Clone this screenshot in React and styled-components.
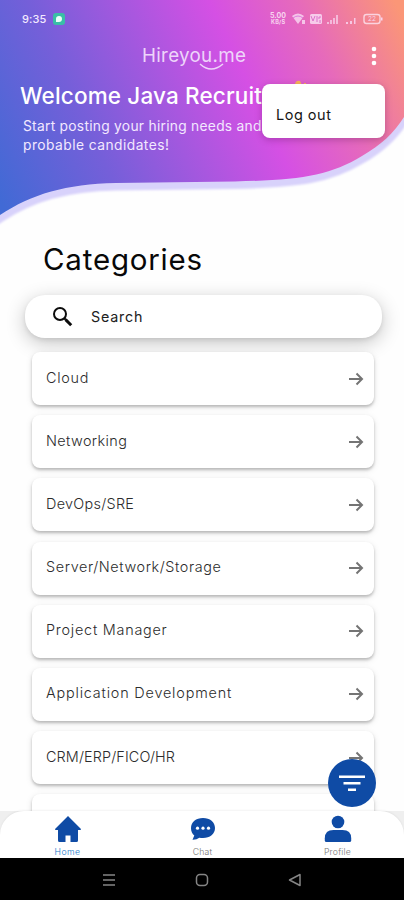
import React from 'react';
import styled, { createGlobalStyle } from 'styled-components';

const GlobalStyle = createGlobalStyle`
  * { box-sizing: border-box; }
  html, body { margin: 0; padding: 0; background: #fff; }
  body { font-family: Inter, 'Open Sans', sans-serif; overflow: hidden; }
  h1, h2, p, ul { margin: 0; padding: 0; font-weight: 400; }
  button { font: inherit; border: 0; padding: 0; background: none; }
`;

const Phone = styled.div`
  position: relative;
  width: 404px;
  height: 900px;
  display: flex;
  flex-direction: column;
  overflow: hidden;
  background: #fefefe;
`;

const Header = styled.header`
  position: relative;
  flex: none;
  height: 226px;
  color: #fff;
`;

const Wave = styled.svg`
  position: absolute;
  inset: 0;
  display: block;
`;

const HeaderContent = styled.div`
  position: relative;
  display: flex;
  flex-direction: column;
`;

const StatusBar = styled.div`
  height: 37px;
  padding: 0 20px 0 22px;
  display: flex;
  align-items: center;
  justify-content: space-between;
`;

const Clock = styled.div`
  display: flex;
  align-items: center;
  gap: 7px;
  font-size: 11px;
  font-weight: 500;
  letter-spacing: 0.1px;
  color: #f3e9ff;
`;

const TitleBar = styled.div`
  height: 38px;
  padding: 0 25px 0 142px;
  display: flex;
  align-items: center;
  justify-content: space-between;
`;

const Brand = styled.div`
  position: relative;
  font-size: 18.8px;
  line-height: 22px;
  letter-spacing: 0.3px;
  color: #eed5fa;
`;

const Smile = styled.svg`
  position: absolute;
  left: 57px;
  top: 18px;
`;

const Greeting = styled.h1`
  padding: 7px 0 0 20px;
  font-size: 22.5px;
  line-height: 27px;
  font-weight: 500;
  letter-spacing: 0.15px;
  white-space: nowrap;
`;

const Lead = styled.p`
  padding: 8px 0 0 23px;
  display: flex;
  flex-direction: column;
  font-size: 13.8px;
  line-height: 19px;
  white-space: nowrap;
  color: #f3e8ff;
`;

const LeadLine = styled.span`
  letter-spacing: ${(p) => p.$spacing}px;
`;

const Hand = styled.svg`
  position: absolute;
  left: 292px;
  top: 79px;
`;

const Menu = styled.div`
  position: absolute;
  z-index: 3;
  left: 262px;
  top: 84px;
  width: 123px;
  height: 54px;
  padding-left: 14px;
  display: flex;
  align-items: center;
  border-radius: 8px;
  background: #fff;
  box-shadow: 0 2px 7px rgba(60, 0, 60, 0.28);
`;

const MenuItem = styled.button`
  padding-top: 7px;
  color: #161616;
  font-size: 14.5px;
  letter-spacing: 0.5px;
`;

const Main = styled.main`
  flex: 1;
  min-height: 0;
  overflow: hidden;
  display: flex;
  flex-direction: column;
`;

const Heading = styled.h2`
  flex: none;
  padding: 15px 0 0 43px;
  height: 69px;
  font-size: 29.5px;
  line-height: 36px;
  letter-spacing: 0.8px;
  color: #080808;
`;

const SearchBar = styled.div`
  flex: none;
  height: 43px;
  margin: 0 22px 0 25px;
  padding: 0 0 1px 27px;
  display: flex;
  align-items: center;
  gap: 18px;
  border-radius: 20px;
  background: #fff;
  box-shadow: 0 5px 19px rgba(0, 0, 0, 0.23), 0 2px 4px rgba(0, 0, 0, 0.08);
  font-size: 14.3px;
  letter-spacing: 0.8px;
  color: #202020;
`;

const List = styled.ul`
  margin: 14px 30px 0 32px;
  display: flex;
  flex-direction: column;
  gap: 10.2px;
  list-style: none;
`;

const Row = styled.li`
  flex: none;
  height: 53px;
  padding: 0 10px 3px 14px;
  display: flex;
  align-items: center;
  justify-content: space-between;
  border-radius: 8px;
  background: #fff;
  box-shadow: 0 2px 3px rgba(0, 0, 0, 0.22), 0 2px 7px rgba(0, 0, 0, 0.1);
  font-size: 14.4px;
  color: #2c2c2c;
`;

const RowLabel = styled.span`
  font-weight: 300;
  letter-spacing: ${(p) => p.$spacing}px;
`;

const RowArrow = styled.svg`
  margin-top: 3px;
`;

const FilterButton = styled.button`
  position: absolute;
  z-index: 2;
  left: 328px;
  top: 759px;
  width: 48px;
  height: 48px;
  border-radius: 50%;
  background: #0f4ba5;
  display: grid;
  place-items: center;
`;

const TabDock = styled.div`
  position: relative;
  flex: none;
  height: 47px;
  background: #efefef;
`;

const Tabs = styled.nav`
  height: 47px;
  padding-left: 1px;
  display: grid;
  grid-template-columns: repeat(3, 135px);
  justify-content: center;
  border-radius: 24px 24px 0 0;
  background: #fff;
  box-shadow: 0 -1px 2px rgba(0, 0, 0, 0.05);
`;

const Tab = styled.div`
  padding-top: 4px;
  display: flex;
  flex-direction: column;
  align-items: center;
  gap: 4px;
  font-size: 8.7px;
  line-height: 10px;
  font-weight: 300;
  letter-spacing: ${(p) => (p.$active ? 0.4 : 0.2)}px;
  color: ${(p) => (p.$active ? '#1677c8' : '#777')};
`;

const SystemBar = styled.div`
  flex: none;
  height: 42px;
  padding: 2px 0 0 102px;
  display: grid;
  grid-template-columns: 93px 93px 14px;
  align-items: center;
  background: #000;
`;

const TabIcon = ({ name }) => (
  <svg width="28" height="28" viewBox="0 0 28 28" fill="#0f4ba5">
    {name === 'Home' && (
      <path d="M14 1 27 14Q27.3 15 26 15H24V25.5Q24 27 22.5 27H16.5V20.5H11.5V27H5.5Q4 27 4 25.5V15H2Q.7 15 1 14Z" />
    )}
    {name === 'Chat' && (
      <>
        <path d="M14 3C7 3 2 7 2 13.2c0 3.2 1.4 5.7 3.3 7.4L3.5 24.7c3 .1 5-.8 6.8-2 1.1.3 2.4.4 3.7.4 7 0 12-4 12-10S21 3 14 3Z" />
        <g fill="#fff">
          <circle cx="8.5" cy="13.2" r="1.6" />
          <circle cx="14" cy="13.2" r="1.6" />
          <circle cx="19.5" cy="13.2" r="1.6" />
        </g>
      </>
    )}
    {name === 'Profile' && (
      <>
        <circle cx="14" cy="7" r="6.3" />
        <path d="M.8 25.5v-2.2Q.8 15 9.5 15h9q8.7 0 8.7 8.3v2.2Q27.2 27 25.5 27h-23Q.8 27 .8 25.5Z" />
      </>
    )}
  </svg>
);

const StatusIcons = () => (
  <svg width="116" height="16" viewBox="0 0 116 16" fill="#f8d5f0">
    <g fontFamily="Inter, sans-serif" fontWeight="700">
      <text x="2" y="7" fontSize="7" textLength="16">5.00</text>
      <text x="3" y="13" fontSize="5.5" textLength="14">KB/S</text>
    </g>
    <path d="M24 5q6-5 12 0l-6 8ZM34 9h3v4h-3z" opacity=".85" />
    <path d="M25 7q5-4 10 0" fill="none" stroke="#d867d8" strokeWidth=".8" />
    <rect x="42" y="3" width="12" height="10" rx="1.5" opacity=".9" />
    <path d="m43 5 2 5 2-5M49 5v6M52 5v2h-2m2 2v3" fill="none" stroke="#d966c7" strokeWidth=".9" />
    <path d="M59 11h2v2h-2zm3-2h2v4h-2zm3-2h2v6h-2zm3-3h2v9h-2z" opacity=".7" />
    <path d="M78 11h2v2h-2zm4-1h2v3h-2zm4-3h1.5v6H86z" opacity=".85" />
    <rect x="96" y="3.5" width="16" height="9" rx="2.5" fill="none" stroke="#fbd3df" strokeWidth="1.4" />
    <path d="M113 6.5h1.5v3H113z" />
    <text x="104" y="10.4" fontSize="6.5" textAnchor="middle" fontFamily="Inter, sans-serif">22</text>
  </svg>
);

const categories = [
  ['Cloud', 0.75],
  ['Networking', 0.4],
  ['DevOps/SRE', 0.3],
  ['Server/Network/Storage', 0.6],
  ['Project Manager', 0.77],
  ['Application Development', 0.82],
  ['CRM/ERP/FICO/HR', 0.13],
  ['', 0],
];

const curve =
  'M0 215C32 194 66 184 116 183L235 181.5C300 180 329 176 362 156C381 145 394 133 404 117';

export default function App() {
  return (
    <>
      <GlobalStyle />
      <Phone>
        <Header>
          <Wave width="404" height="226" viewBox="0 0 404 226">
            <defs>
              <linearGradient id="sky" gradientUnits="userSpaceOnUse" x1="0" y1="200" x2="400" y2="12">
                <stop offset="0" stopColor="#416ad5" />
                <stop offset=".25" stopColor="#755fd9" />
                <stop offset=".62" stopColor="#d550e4" />
                <stop offset=".8" stopColor="#e66abb" />
                <stop offset="1" stopColor="#fb9677" />
              </linearGradient>
              <filter id="soft" x="-5%" y="-20%" width="110%" height="140%">
                <feGaussianBlur stdDeviation="1" />
              </filter>
            </defs>
            <path d={`M-10 222L${curve.slice(1)}L412 103`} transform="translate(0 3)" fill="none" stroke="#d8d2fb" strokeWidth="9" filter="url(#soft)" />
            <path d={`${curve}V0H0Z`} fill="url(#sky)" />
          </Wave>
          <HeaderContent>
            <StatusBar>
              <Clock>
                9:35
                <svg width="12" height="12" viewBox="0 0 12 12">
                  <rect width="12" height="12" rx="3" fill="#39bfa6" />
                  <path d="M3 9V5.8A3 3 0 1 1 6 9Z" fill="#e9fff9" />
                </svg>
              </Clock>
              <StatusIcons />
            </StatusBar>
            <TitleBar>
              <Brand>
                Hireyou.me
                <Smile width="27" height="8" viewBox="0 0 27 8">
                  <path d="M1 1Q12 11 24 1" fill="none" stroke="#eed5fa" strokeWidth="1.5" />
                </Smile>
              </Brand>
              <svg width="10" height="20" viewBox="0 0 10 20" fill="#fff">
                <circle cx="5" cy="3" r="2.3" />
                <circle cx="5" cy="10" r="2.3" />
                <circle cx="5" cy="17" r="2.3" />
              </svg>
            </TitleBar>
            <Greeting>Welcome Java Recruiter</Greeting>
            <Lead>
              <LeadLine $spacing={0.27}>Start posting your hiring needs and</LeadLine>
              <LeadLine $spacing={0.45}>probable candidates!</LeadLine>
            </Lead>
          </HeaderContent>
          <Hand width="20" height="10" viewBox="0 0 20 10">
            <path d="M3 8V5Q4 1 8 2l3 6ZM12 4h2v4h-2z" fill="#f7b457" />
          </Hand>
          <Menu>
            <MenuItem>Log out</MenuItem>
          </Menu>
        </Header>
        <Main>
          <Heading>Categories</Heading>
          <SearchBar>
            <svg width="21" height="21" viewBox="0 0 21 21" fill="none" stroke="#0c0c0c">
              <circle cx="8" cy="8" r="6" strokeWidth="2" />
              <path d="m12.3 12.3 1.5 1.5" strokeWidth="2" />
              <path d="m13.6 13.6 5.6 5.6" strokeWidth="3" />
            </svg>
            Search
          </SearchBar>
          <List>
            {categories.map(([label, spacing]) => (
              <Row key={label}>
                <RowLabel $spacing={spacing}>{label}</RowLabel>
                <RowArrow width="16" height="14" viewBox="0 0 16 14" fill="none" stroke="#747474" strokeWidth="2">
                  <path d="M1 7h13M8.5 1.5 14 7l-5.5 5.5" />
                </RowArrow>
              </Row>
            ))}
          </List>
        </Main>
        <FilterButton aria-label="Filter">
          <svg width="26" height="18" viewBox="0 0 26 18" fill="#fff">
            <path d="M0 1.5h26v2.4H0zM4.5 8h17v2.4h-17zM9 14.5h8v2.4H9z" />
          </svg>
        </FilterButton>
        <TabDock>
          <Tabs>
            {['Home', 'Chat', 'Profile'].map((name) => (
              <Tab key={name} $active={name === 'Home'}>
                <TabIcon name={name} />
                {name}
              </Tab>
            ))}
          </Tabs>
        </TabDock>
        <SystemBar>
          <svg width="14" height="14" viewBox="0 0 14 14" stroke="#858585" strokeWidth="1.6">
            <path d="M1 2h12M1 7h12M1 12h12" />
          </svg>
          <svg width="14" height="14" viewBox="0 0 14 14" fill="none" stroke="#858585" strokeWidth="1.5">
            <rect x="1.5" y="1.5" width="11" height="11" rx="3.5" />
          </svg>
          <svg width="14" height="14" viewBox="0 0 14 14" fill="none" stroke="#858585" strokeWidth="1.5" strokeLinejoin="round">
            <path d="M12 1.5v11L1.5 7Z" />
          </svg>
        </SystemBar>
      </Phone>
    </>
  );
}
